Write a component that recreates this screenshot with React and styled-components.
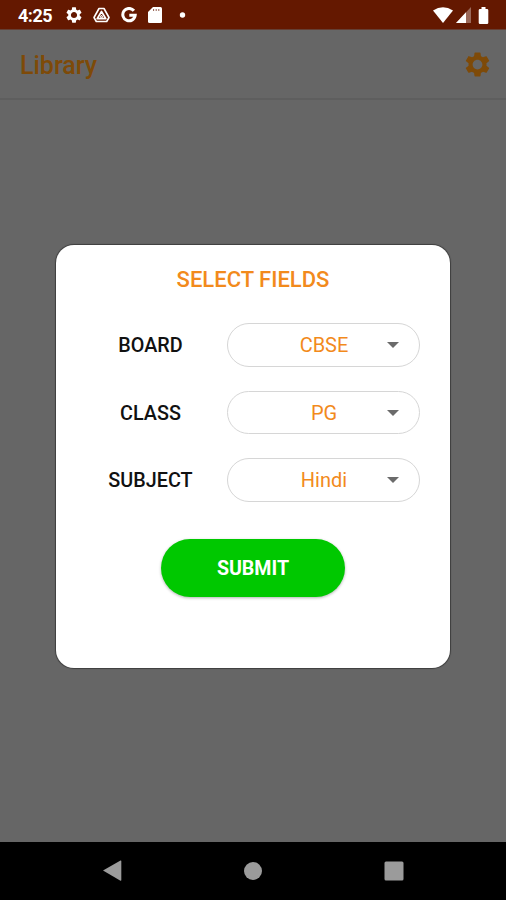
import React from 'react';
import styled, { createGlobalStyle } from 'styled-components';

const GlobalStyle = createGlobalStyle`
  * { box-sizing: border-box; }
  body { margin: 0; overflow: hidden; font-family: Roboto, sans-serif; }
`;

const Screen = styled.div`
  position: relative;
  width: 506px;
  height: 900px;
  display: flex;
  flex-direction: column;
  background: #666;
`;

const StatusBar = styled.header`
  height: 30px;
  display: flex;
  align-items: center;
  justify-content: space-between;
  padding: 1px 14px 0 18px;
  background: #641800;
  border-bottom: 1px solid #653f34;
`;

const StatusGroup = styled.div`
  display: flex;
  align-items: center;
  gap: ${(p) => p.$gap}px;
`;

const Clock = styled.span`
  width: 37px;
  padding-top: 1px;
  font-size: 18px;
  line-height: 20px;
  font-weight: 700;
  letter-spacing: -0.5px;
  color: #fff;
`;

const Glyph = styled.svg`
  display: block;
  flex: none;
`;

const AppBar = styled.div`
  height: 70px;
  display: flex;
  align-items: center;
  justify-content: space-between;
  padding: 0 16px 0 20px;
  border-bottom: 2px solid #5e5e5e;
`;

const Title = styled.h1`
  margin: 3px 0 0;
  font-size: 25px;
  line-height: 30px;
  font-weight: 500;
  color: #7e4a08;
`;

const Content = styled.main`
  flex: 1;
  display: flex;
  justify-content: center;
  align-items: flex-start;
  padding-top: 145px;
`;

const Dialog = styled.section`
  width: 394px;
  height: 423px;
  display: flex;
  flex-direction: column;
  align-items: center;
  border-radius: 18px;
  background: #fff;
  box-shadow: 0 0 1px 1px rgba(0, 0, 0, 0.4);
`;

const DialogTitle = styled.h2`
  margin: 21px 0 0;
  font-size: 22px;
  line-height: 28px;
  font-weight: 500;
  color: #f28a1c;
`;

const Fields = styled.div`
  width: 100%;
  display: grid;
  gap: 24px;
  padding: 29px 31px 0 18px;
`;

const Field = styled.div`
  display: grid;
  grid-template-columns: 153px 193px;
  align-items: center;
`;

const Label = styled.span`
  padding-top: 3px;
  text-align: center;
  font-size: 19.8px;
  line-height: 24px;
  font-weight: 500;
  color: #111;
`;

const Select = styled.button`
  height: 43.5px;
  display: grid;
  grid-template-columns: 1fr 12px;
  align-items: center;
  padding: 1px 20px 0 20px;
  border: 1.5px solid #d6d6d6;
  border-radius: 22px;
  background: #fff;
  font: 400 20px/24px Roboto, sans-serif;
  color: #f28a1c;
`;

const Value = styled.span`
  padding-left: 13px;
  text-align: center;
`;

const Submit = styled.button`
  width: 184px;
  height: 58px;
  margin-top: 37px;
  padding: 2px 0 0;
  border: 0;
  border-radius: 29px;
  background: #00c800;
  box-shadow: 0 1px 3px rgba(0, 0, 0, 0.3);
  font: 700 19.6px/24px Roboto, sans-serif;
  color: #fff;
`;

const NavBar = styled.nav`
  height: 58px;
  display: flex;
  justify-content: space-between;
  align-items: center;
  padding: 0 102px;
  background: #000;
`;

const Gear = ({ size, color }) => (
  <Glyph width={size} height={size} viewBox="2 2 20 20" fill={color}>
    <path d="M19.14 12.94c.04-.3.06-.61.06-.94s-.02-.64-.07-.94l2.03-1.58c.18-.14.23-.41.12-.61l-1.92-3.32c-.12-.22-.37-.29-.59-.22l-2.39.96c-.5-.38-1.03-.7-1.62-.94l-.36-2.54c-.04-.24-.24-.41-.48-.41h-3.84c-.24 0-.43.17-.47.41l-.36 2.54c-.59.24-1.13.57-1.62.94l-2.39-.96c-.22-.08-.47 0-.59.22L2.74 8.87c-.12.21-.08.47.12.61l2.03 1.58c-.05.3-.09.63-.09.94s.02.64.07.94l-2.03 1.58c-.18.14-.23.41-.12.61l1.92 3.32c.12.22.37.29.59.22l2.39-.96c.5.38 1.03.7 1.62.94l.36 2.54c.05.24.24.41.48.41h3.84c.24 0 .44-.17.47-.41l.36-2.54c.59-.24 1.13-.56 1.62-.94l2.39.96c.22.08.47 0 .59-.22l1.92-3.32c.12-.22.07-.47-.12-.61l-2.01-1.58zM12 15.9c-2.15 0-3.9-1.75-3.9-3.9s1.75-3.9 3.9-3.9 3.9 1.75 3.9 3.9-1.75 3.9-3.9 3.9z" />
  </Glyph>
);

const fields = [
  { label: 'BOARD', value: 'CBSE' },
  { label: 'CLASS', value: 'PG' },
  { label: 'SUBJECT', value: 'Hindi' },
];

export default function App() {
  return (
    <>
      <GlobalStyle />
      <Screen>
        <StatusBar>
          <StatusGroup $gap={11}>
            <Clock>4:25</Clock>
            <Gear size={16} color="#fff" />
            <Glyph width="17" height="16" viewBox="0 0 17 16" fill="none" stroke="#fff" strokeLinejoin="round">
              <path d="M6 1.5h5l5 9-2.3 4H3.3l-2.3-4z" strokeWidth="1.6" />
              <path d="M8.5 4.5l4.3 7.2H4.2z" strokeWidth="1.7" />
              <path d="M8.5 8l1.3 2.3H7.2z" strokeWidth="1" />
            </Glyph>
            <Glyph width="16" height="16" viewBox="0 0 16 16" fill="none" stroke="#fff" strokeWidth="3">
              <path d="M12.9 3.8A6.2 6.2 0 1 0 14.2 8.2H8.3" />
            </Glyph>
            <Glyph width="14" height="16" viewBox="0 0 14 16">
              <path d="M5 0h7.5Q14 0 14 1.5v13q0 1.5-1.5 1.5h-11Q0 16 0 14.500V5z" fill="#fff" />
              <path d="M5.600 2v2M8.200 2v2M10.800 2v2" stroke="#641800" strokeWidth="1" opacity=".7" />
            </Glyph>
            <Glyph width="18" height="6" viewBox="0 0 18 6">
              <circle cx="9.500" cy="3" r="2.700" fill="#fff" />
            </Glyph>
          </StatusGroup>
          <StatusGroup $gap={3}>
            <Glyph width="20" height="16" viewBox="0 0 20 16" fill="#fff">
              <path d="M0 3.500Q10-3 20 3.500L10 16z" />
            </Glyph>
            <Glyph width="15" height="16" viewBox="0 0 15 16" fill="#fff">
              <path d="M15 0v16H0z" opacity=".35" />
              <path d="M10 5.300V16H0z" />
            </Glyph>
            <Glyph width="18" height="17" viewBox="0 0 18 17" fill="#fff">
              <path d="M7.500 0h4v2h1.500q1.300 0 1.300 1.300v12.400q0 1.300-1.300 1.300H6q-1.300 0-1.300-1.300V3.300Q4.700 2 6 2h1.500z" />
            </Glyph>
          </StatusGroup>
        </StatusBar>
        <AppBar>
          <Title>Library</Title>
          <Gear size={25} color="#7e4a08" />
        </AppBar>
        <Content>
          <Dialog role="dialog" aria-label="Select fields">
            <DialogTitle>SELECT FIELDS</DialogTitle>
            <Fields>
              {fields.map(({ label, value }) => (
                <Field key={label}>
                  <Label>{label}</Label>
                  <Select>
                    <Value>{value}</Value>
                    <Glyph width="12" height="6" viewBox="0 0 12 6">
                      <path d="M0 0h12L6 6z" fill="#6b6b6b" />
                    </Glyph>
                  </Select>
                </Field>
              ))}
            </Fields>
            <Submit>SUBMIT</Submit>
          </Dialog>
        </Content>
        <NavBar>
          <Glyph width="20" height="22" viewBox="0 0 20 22" fill="#9b9b9b">
            <path d="M1 10.500L18.500.5q.8-.3.800.6v19q0 .9-.8.600z" />
          </Glyph>
          <Glyph width="18" height="18" viewBox="0 0 18 18" fill="#9b9b9b">
            <circle cx="9" cy="9" r="9" />
          </Glyph>
          <Glyph width="20" height="20" viewBox="0 0 20 20" fill="#9b9b9b">
            <rect x=".5" y=".5" width="19" height="19" rx="1.500" />
          </Glyph>
        </NavBar>
      </Screen>
    </>
  );
}
